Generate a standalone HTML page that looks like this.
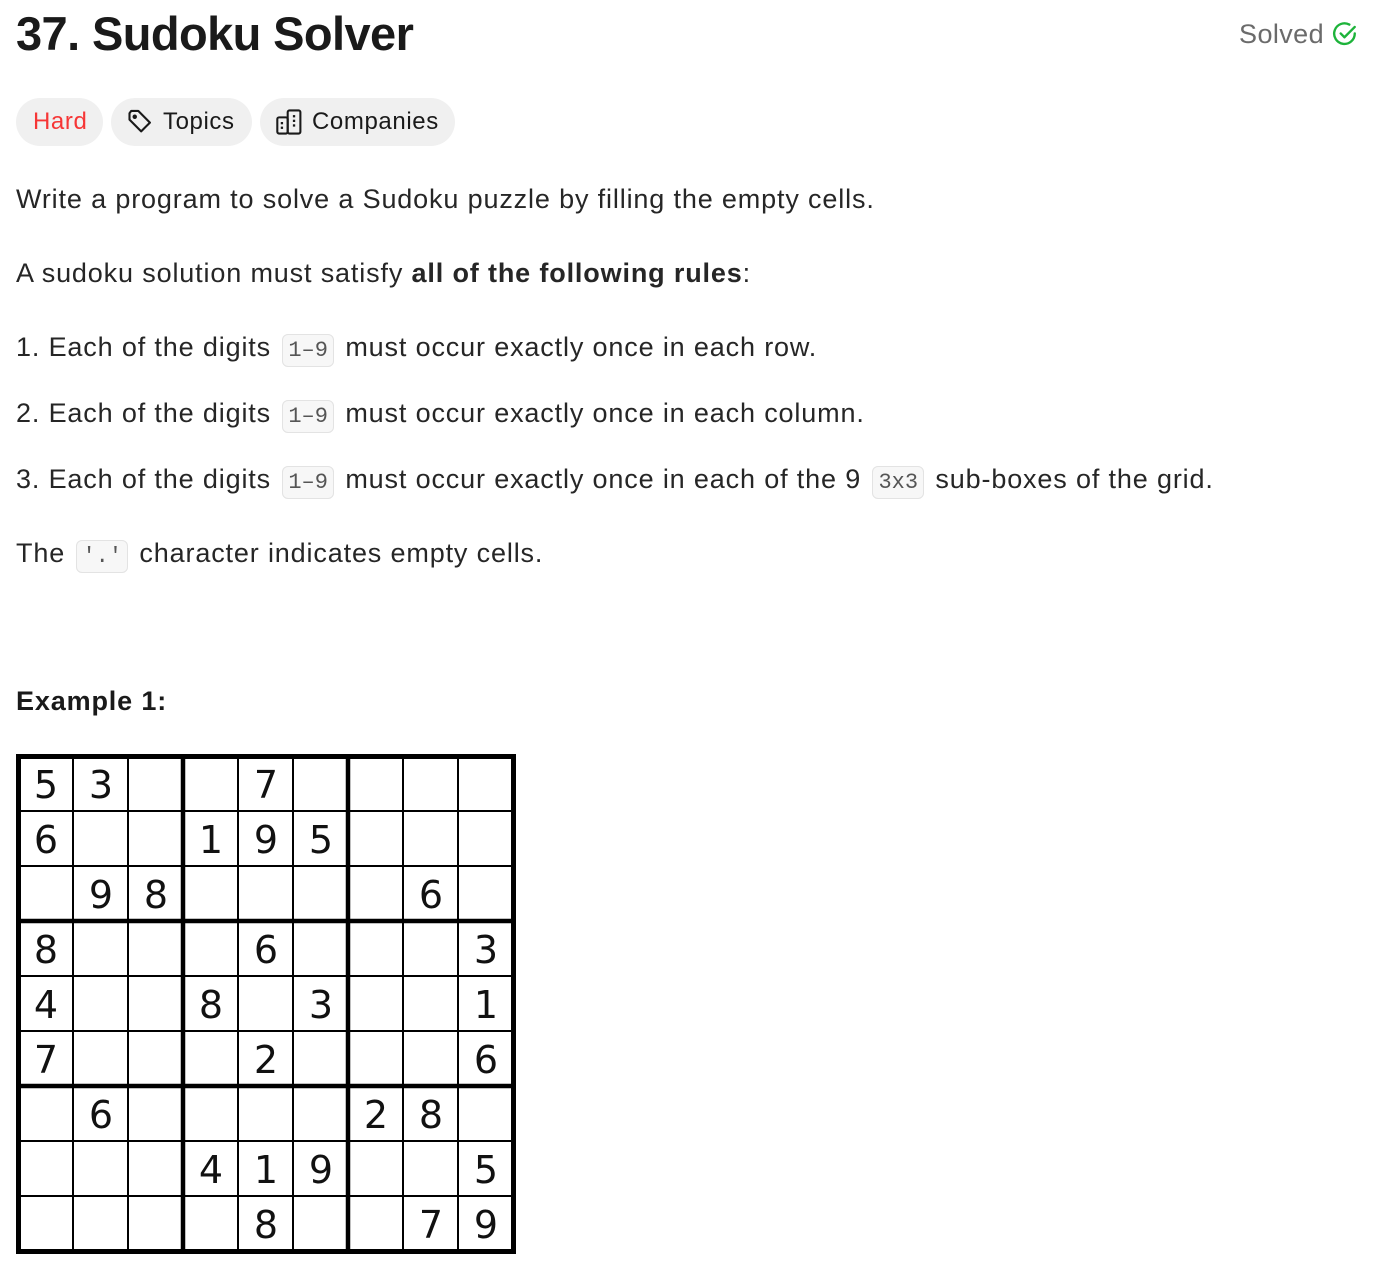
<!DOCTYPE html>
<html><head><meta charset="utf-8"><style>
body{margin:0;width:1378px;height:1276px;background:#fff;font-family:"Liberation Sans",sans-serif;color:#262626;position:relative;overflow:hidden}
.a{position:absolute;left:16px;white-space:nowrap;font-size:27px;letter-spacing:0.85px;line-height:40px}
h1{position:absolute;left:16px;top:4px;margin:0;font-size:47px;font-weight:bold;color:#1a1a1a;line-height:60px;letter-spacing:-0.6px}
.solved{position:absolute;right:20px;top:14px;font-size:27px;letter-spacing:0.4px;color:#6b6b6b;line-height:40px;display:flex;align-items:center;gap:8px}
.pill{position:absolute;top:98px;height:48px;border-radius:24px;background:#f0f0f0;font-size:24px;letter-spacing:0.6px;line-height:50px;display:flex;align-items:center;box-sizing:border-box;color:#1a1a1a}
code{font-family:"Liberation Mono",monospace;font-size:22px;letter-spacing:0;color:#555;background:#f7f7f7;border:1px solid #e3e3e3;border-radius:6px;padding:3px 5px;margin:0 3px}
</style></head><body>
<h1>37. Sudoku Solver</h1>
<div class="solved">Solved <svg width="26" height="26" viewBox="0 0 24 24" fill="none" stroke="#1db33a" stroke-width="2.2" stroke-linecap="round" stroke-linejoin="round"><path d="M21 11.5A9.5 9.5 0 1 1 16 3.3"/><path d="M8 11.5l3.5 3.5L21 5.5"/></svg></div>
<div class="pill" style="left:16px;width:87px;color:#f63636;padding-left:17px">Hard</div>
<div class="pill" style="left:111px;width:141px;padding-left:15px"><svg width="28" height="28" viewBox="0 0 24 24" fill="none" stroke="#1a1a1a" stroke-width="1.8" stroke-linejoin="round"><path d="M3 4.5V10l10 10 7.5-7.5-10-10H4.5z"/><circle cx="7.5" cy="7.5" r="1" fill="#1a1a1a"/></svg><span style="margin-left:9px">Topics</span></div>
<div class="pill" style="left:260px;width:195px;padding-left:15px"><svg width="30" height="28" viewBox="0 0 26 24" fill="none" stroke="#1a1a1a" stroke-width="1.8" stroke-linejoin="round"><rect x="2" y="8" width="9" height="14" rx="1.5"/><rect x="11" y="2" width="11" height="20" rx="1.5"/><g fill="#1a1a1a" stroke="none"><rect x="5" y="12" width="2" height="2"/><rect x="5" y="16" width="2" height="2"/><rect x="15.5" y="6" width="2" height="2"/><rect x="15.5" y="10" width="2" height="2"/><rect x="15.5" y="14" width="2" height="2"/></g></svg><span style="margin-left:7px">Companies</span></div>
<div class="a" style="top:179px">Write a program to solve a Sudoku puzzle by filling the empty cells.</div>
<div class="a" style="top:253px">A sudoku solution must satisfy <b>all of the following rules</b>:</div>
<div class="a" style="top:327px">1. Each of the digits <code>1–9</code> must occur exactly once in each row.</div>
<div class="a" style="top:393px">2. Each of the digits <code>1–9</code> must occur exactly once in each column.</div>
<div class="a" style="top:459px">3. Each of the digits <code>1–9</code> must occur exactly once in each of the 9 <code>3x3</code> sub-boxes of the grid.</div>
<div class="a" style="top:533px">The <code>'.'</code> character indicates empty cells.</div>
<div class="a" style="top:681px;font-weight:bold;color:#1a1a1a">Example 1:</div>
<svg style="position:absolute;left:0;top:0" width="1378" height="1276">
<rect x="16" y="754" width="500" height="500" fill="#fff"/>
<g stroke="#000">
<g stroke-width="2">
<line x1="73" y1="754" x2="73" y2="1254"/><line x1="128" y1="754" x2="128" y2="1254"/>
<line x1="238" y1="754" x2="238" y2="1254"/><line x1="293" y1="754" x2="293" y2="1254"/>
<line x1="403" y1="754" x2="403" y2="1254"/><line x1="458" y1="754" x2="458" y2="1254"/>
<line y1="811" x1="16" y2="811" x2="516"/><line y1="866" x1="16" y2="866" x2="516"/>
<line y1="976" x1="16" y2="976" x2="516"/><line y1="1031" x1="16" y2="1031" x2="516"/>
<line y1="1141" x1="16" y2="1141" x2="516"/><line y1="1196" x1="16" y2="1196" x2="516"/>
</g>
<g stroke-width="4.5">
<line x1="183" y1="754" x2="183" y2="1254"/><line x1="348" y1="754" x2="348" y2="1254"/>
<line y1="921" x1="16" y2="921" x2="516"/><line y1="1086" x1="16" y2="1086" x2="516"/>
</g>
<rect x="18.5" y="756.5" width="495" height="495" fill="none" stroke-width="5"/>
</g>
<g font-family="DejaVu Sans,sans-serif" font-size="38" text-anchor="middle" fill="#111">
<text x="46" y="798">5</text><text x="101" y="798">3</text><text x="266" y="798">7</text>
<text x="46" y="853">6</text><text x="211" y="853">1</text><text x="266" y="853">9</text><text x="321" y="853">5</text>
<text x="101" y="908">9</text><text x="156" y="908">8</text><text x="431" y="908">6</text>
<text x="46" y="963">8</text><text x="266" y="963">6</text><text x="486" y="963">3</text>
<text x="46" y="1018">4</text><text x="211" y="1018">8</text><text x="321" y="1018">3</text><text x="486" y="1018">1</text>
<text x="46" y="1073">7</text><text x="266" y="1073">2</text><text x="486" y="1073">6</text>
<text x="101" y="1128">6</text><text x="376" y="1128">2</text><text x="431" y="1128">8</text>
<text x="211" y="1183">4</text><text x="266" y="1183">1</text><text x="321" y="1183">9</text><text x="486" y="1183">5</text>
<text x="266" y="1238">8</text><text x="431" y="1238">7</text><text x="486" y="1238">9</text>
</g>
</svg>
</body></html>
